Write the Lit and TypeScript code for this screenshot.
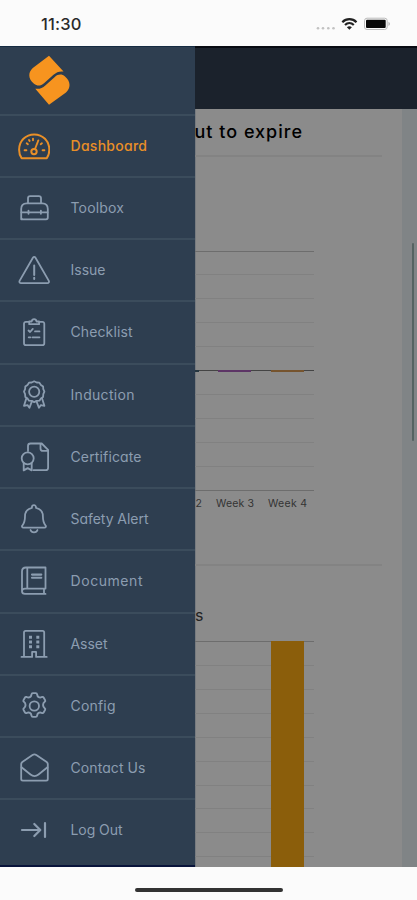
import { LitElement, html, svg, css } from "lit";
import { customElement, property } from "lit/decorators.js";
import { classMap } from "lit/directives/class-map.js";

const icons: Record<string, unknown> = {
  dashboard: svg`<path d="M3.6 28.2C2 26 1.1 23.3 1.1 19.7 1.1 11 7.6 4.4 16.2 4.4S31.3 11 31.3 19.7c0 3.600-.9 6.300-2.500 8.500z" stroke-width="2"/>
    <circle cx="16" cy="21.600" r="2.700" stroke-width="2"/><path d="M17 19l3.300-8.500" stroke-width="1.900"/>
    <path d="M6.600 20.300h1.800M24.600 20.300h1.800M8.700 13.300l1.200.9M15 8.600v1.600M23.900 13.300l-1.200.9M11 10l.6.9" stroke-width="1.900"/>`,
  toolbox: svg`<path d="M3.200 27.300V17c0-3.600 2.200-5.600 5.500-5.600h15.600c3.300 0 5.500 2 5.500 5.600v8.600c0 1.100-.6 1.700-1.700 1.700H4.900c-1.100 0-1.700-.6-1.700-1.700z"/>
    <path d="M10 11.200V6.300c0-1.400.8-2.200 2.200-2.200h8.600c1.400 0 2.200.8 2.200 2.200v4.900M3.400 20.300h26.200M10.500 18.600v3.200M22.900 18.600v3.200"/>`,
  issue: svg`<path d="M14.900 3.700 1.700 26.600c-.7 1.300-.1 2.500 1.400 2.500h26.200c1.500 0 2.100-1.200 1.400-2.500L17.500 3.700c-.7-1.100-1.900-1.100-2.600 0z"/>
    <path d="M16.200 11.500v9.500M16.200 23.800v1.200" stroke-width="2"/>`,
  checklist: svg`<path d="M11 5.800H7.900c-1.100 0-1.900.8-1.900 1.900v19.500c0 1.100.8 1.900 1.900 1.900h16.500c1.100 0 1.900-.8 1.900-1.900V7.700c0-1.100-.8-1.900-1.900-1.900h-3.100"/>
    <path d="M11.200 8.200V5.500h2.500c.2-1.500 1-2.400 2.400-2.400s2.200.9 2.400 2.400h2.600v2.700z"/>
    <path d="M10.500 14.500l1.600 1.500 2.700-3.100M17 15.400h4.500M10.700 21.300h1.700M14.500 21.300h7"/>`,
  induction: svg`<path d="M16.200 2.300l2.500 1.200 2.700.2 1.500 2.200 2.200 1.600.2 2.700 1.100 2.500-1.100 2.500-.2 2.700-2.200 1.600-1.500 2.200-2.700.2-2.500 1.200-2.500-1.200-2.700-.2-1.500-2.200-2.200-1.600-.2-2.700L6 12.700l1.100-2.500.2-2.700 2.200-1.600L11 3.700l2.700-.2z"/>
    <circle cx="16.200" cy="12.700" r="5.100"/>
    <path d="M8.400 19.300L6 26.800l3.500-.7 1.900 2.700 2.600-6.600M24 19.300l2.400 7.500-3.500-.7-1.900 2.700-2.600-6.600"/>`,
  certificate: svg`<path d="M10 10V5c0-1.700.8-2.500 2.500-2.500h11.200l6.400 6.400v17.800c0 1.700-.8 2.500-2.500 2.500H15.500M22.500 2.900v4.500c0 1.700.8 2.500 2.500 2.500h4.800"/>
    <circle cx="9.700" cy="17.300" r="6"/><path d="M5.700 22v7.400l4-2.300 4 2.300V22"/>`,
  bell: svg`<path d="M13.900 4.900C9.400 5.900 7 9.100 7 13.400c0 4.900-.6 6.500-2.600 8.900-.8.900-.4 2.400 1.100 2.400h20.900c1.500 0 1.900-1.500 1.100-2.400-2-2.400-2.600-4-2.600-8.900 0-4.300-2.400-7.500-6.900-8.500V4.200c0-1.100-.9-2-2-2s-2.100.9-2.100 2z"/>
    <path d="M12.500 27c.5 1.500 1.700 2.400 3.500 2.400s3-.9 3.500-2.400"/>`,
  document: svg`<path d="M27.500 23.600V2.500H8c-2.500 0-4 1.600-4 4v19.200M27.500 23.600H7c-1.900 0-3 1-3 2.600s1.100 2.700 3 2.700h20.500M26 23.800v4.800M9.300 2.800v20.500"/>
    <path d="M14 9.600h9.300M14 12.800h9.300" stroke-width="2.100"/>`,
  asset: svg`<path d="M6 28.800V4.500c0-1 .6-1.600 1.600-1.600h17c1 0 1.600.6 1.600 1.600v24.300M3.500 28.900h10.600v-5h4v5h10.600"/>
    <path d="M11 9.200h3M18.300 9.200h3M11 14h3M18.300 14h3M11 18.800h3M18.300 18.800h3" stroke-width="2.900" stroke-linecap="butt"/>`,
  config: svg`<circle cx="16.300" cy="16" r="4.700"/>
    <path d="M14.800 3.100h3c.9 0 1.200.4 1.300 1.200.3 2.700 2.300 3.800 4.800 2.700.8-.3 1.300-.2 1.700.5l1.500 2.600c.4.700.3 1.200-.4 1.700-2.200 1.600-2.200 4.800 0 6.400.7.500.8 1 .4 1.700l-1.500 2.600c-.4.700-.9.800-1.700.5-2.500-1.100-4.500 0-4.800 2.700-.1.800-.4 1.200-1.300 1.200h-3c-.9 0-1.200-.4-1.300-1.200-.3-2.700-2.300-3.800-4.800-2.700-.8.300-1.300.2-1.700-.5l-1.500-2.600c-.4-.7-.3-1.200.4-1.700 2.200-1.600 2.200-4.800 0-6.400-.7-.5-.8-1-.4-1.700l1.500-2.600c.4-.7.900-.8 1.700-.5 2.500 1.100 4.500 0 4.800-2.700.1-.8.400-1.200 1.300-1.200z" stroke-width="1.900"/>`,
  contact: svg`<path d="M3.200 27V12.200c0-1 .3-1.600 1.100-2.200L14.500 3.100c1.300-.9 2.500-.9 3.800 0L28.700 10c.8.600 1.100 1.200 1.100 2.200V27c0 1-.6 1.600-1.600 1.600H4.800c-1 0-1.600-.6-1.600-1.600z"/>
    <path d="M3.500 15.200l9 7.300c2.500 2 5.500 2 8 0l9-7.300"/>`,
  logout: svg`<path d="M4 16h18M16.300 10l6 6-6 6M27 9.200v13.700" stroke-width="2.200"/>`,
};

const items = [
  { icon: "dashboard", label: "Dashboard", width: 76.500 },
  { icon: "toolbox", label: "Toolbox", width: 53.500 },
  { icon: "issue", label: "Issue", width: 35 },
  { icon: "checklist", label: "Checklist", width: 62 },
  { icon: "induction", label: "Induction", width: 64 },
  { icon: "certificate", label: "Certificate", width: 71 },
  { icon: "bell", label: "Safety Alert", width: 78 },
  { icon: "document", label: "Document", width: 72 },
  { icon: "asset", label: "Asset", width: 37 },
  { icon: "config", label: "Config", width: 45 },
  { icon: "contact", label: "Contact Us", width: 75 },
  { icon: "logout", label: "Log Out", width: 52 },
];

@customElement("menu-row")
class MenuRow extends LitElement {
  @property() icon = "";
  @property() label = "";
  @property({ type: Number }) span = 60;
  @property({ type: Boolean }) active = false;

  static styles = css`
    :host { display: block; flex: 0 0 62.250px; box-sizing: border-box; border-top: 2px solid #3b4c5c; }
    .row { display: flex; align-items: center; height: 100%; padding-left: 18px; gap: 20px; color: #8c9db0; }
    .active { color: #e98f27; }
    .icon { width: 32px; height: 32px; fill: none; stroke: currentColor; stroke-width: 1.8; stroke-linecap: round; stroke-linejoin: round; }
    .label { width: 110px; height: 24px; overflow: visible; fill: currentColor; font: 400 14px Inter, sans-serif; font-feature-settings: "cv11"; }
    .active .label { font-weight: 500; }
  `;

  render() {
    return html`<div class=${classMap({ row: true, active: this.active })}>
      <svg class="icon" viewBox="0 0 32 32">${icons[this.icon]}</svg>
      <svg class="label"><text x="0.500" y="17" textLength=${this.span}>${this.label}</text></svg>
    </div>`;
  }
}

@customElement("app-root")
class AppRoot extends LitElement {
  static styles = css`
    :host { display: flex; flex-direction: column; width: 417px; height: 900px; overflow: hidden; background: #fbfbfb; font-family: Inter, sans-serif; font-feature-settings: "cv11"; }
    .status { flex: 0 0 46px; box-sizing: border-box; display: flex; justify-content: space-between; padding: 0 26px 0 41px; }
    .time { font: 500 16.500px/46px Inter, sans-serif; letter-spacing: .2px; padding-top: 1px; height: 45px; color: #2a2a2a; }
    .signals { width: 76px; height: 46px; }
    .stage { flex: 0 0 821px; display: flex; overflow: hidden; }
    .drawer { flex: 0 0 195px; box-sizing: border-box; display: flex; flex-direction: column; background: #2e3e50; border-top: 1px solid #152b42; border-bottom: 2px solid #08133a; }
    .brand { flex: 0 0 66.600px; }
    .logo { display: block; width: 42px; height: 50px; margin: 8px 0 0 28px; }
    .pane { flex: 1; display: flex; flex-direction: column; overflow: hidden; }
    .bar { flex: 0 0 63px; box-sizing: border-box; background: #1b222c; border-top: 2px solid #080b12; }
    .body { flex: 1; display: flex; min-height: 0; background: #808486; }
    .card { width: 207px; background: #8b8b8b; box-shadow: inset 1px 0 #777b80; overflow: hidden; }
    .gutter { flex: 1; padding: 134px 3px 0 0; display: flex; justify-content: flex-end; }
    .thumb { width: 2px; height: 198px; background: #566362; border-radius: 1px; }
    .title { height: 46px; font: 500 18px/46px Inter, sans-serif; color: #0c0c0c; }
    .title-text { display: block; width: 120px; height: 46px; }
    .rule { height: 2px; width: 187px; background: #838383; }
    .plot { position: relative; width: 119px; margin-top: 93.500px; }
    .step { box-sizing: border-box; height: 23.940px; border-top: 1px solid #818181; }
    .edge { border-top-color: #6d6d6d; }
    .axis { border-top-color: #444; }
    .end { height: 1px; background: #6d6d6d; }
    .mark { position: absolute; top: 119px; height: 2px; width: 33px; }
    .slate { left: 0; width: 4px; background: #263640; }
    .purple { left: 23px; background: #5d3566; }
    .amber { left: 76px; background: #76542e; }
    .weeks { display: block; width: 119px; height: 24px; font-size: 10.500px; fill: #333; }
    .second { padding-top: 49px; }
    .name { font: 400 16px/32px Inter, sans-serif; height: 32px; margin-top: 33px; color: #222; }
    .plot2 { margin-top: 10px; }
    .column { position: absolute; left: 76px; top: 0; width: 32.500px; height: 300px; background: #8b5e0b; }
    .home { flex: 0 0 33px; box-sizing: border-box; padding: 21px 0 0 135px; }
    .pill { width: 148px; height: 4px; border-radius: 2px; background: #333; }
  `;

  render() {
    return html`
      <div class="status">
        <span class="time">11:30</span>
        <svg class="signals" viewBox="315 0 76 46">
          <g fill="#c2c2c2"><circle cx="318" cy="28.300" r="1.300"/><circle cx="323" cy="28.300" r="1.300"/><circle cx="328.300" cy="28.300" r="1.300"/><circle cx="333.500" cy="28.300" r="1.300"/></g>
          <g fill="none" stroke="#222" stroke-width="2.200"><path d="M342.300 22.200c4-4 10.200-4 14.200 0"/><path d="M345 25c2.600-2.500 6.200-2.500 8.800 0"/></g>
          <path d="M346.900 27.200c1.500-1.200 3.500-1.200 5 0l-2.500 2.600z" fill="#222"/>
          <rect x="364.500" y="18.200" width="22.700" height="11.300" rx="2.500" fill="none" stroke="#bbb"/>
          <rect x="366" y="19.700" width="19.700" height="8.300" rx="1" fill="#080808"/>
          <path d="M388.600 21.700q2.200 2.100 0 4.200z" fill="#999"/>
        </svg>
      </div>
      <div class="stage">
        <nav class="drawer">
          <div class="brand">
            <svg class="logo" viewBox="28 55 42 50">
              <path fill="#f7941f" d="M49 55.700L63.500 71.500C59.500 71 56.500 72 53.500 74.800L44 83.200c-3.300 3-6.700 3.200-10 .6-5.800-4.600-6.300-11-1.200-15.700z"/>
              <path fill="#f7941f" d="M49 104.800L35.300 88.700c4 .6 7-.4 10-3.200l9.500-8.500c3.400-3 6.900-3.200 10.200-.6 5.700 4.500 6 11.400 1 16z"/>
            </svg>
          </div>
          ${items.map((it, i) => html`<menu-row .icon=${it.icon} .label=${it.label} .span=${it.width} .active=${i === 0}></menu-row>`)}
        </nav>
        <main class="pane">
          <div class="bar"></div>
          <div class="body">
            <section class="card">
              <svg class="title-text title"><text x="-0.500" y="29" textLength="107.500">ut to expire</text></svg>
              <div class="rule"></div>
              <div class="plot">
                ${Array.from({ length: 10 }, (_, i) => html`<div class=${classMap({ step: true, edge: i === 0, axis: i === 5 })}></div>`)}
                <div class="end"></div>
                <div class="mark slate"></div><div class="mark purple"></div><div class="mark amber"></div>
              </div>
              <svg class="weeks"><text x="0.500" y="16">2</text><text x="21" y="16" textLength="38">Week 3</text><text x="73" y="16" textLength="39">Week 4</text></svg>
              <div class="second">
                <div class="rule"></div>
                <div class="name">s</div>
                <div class="plot plot2">
                  ${Array.from({ length: 10 }, (_, i) => html`<div class=${classMap({ step: true, edge: i === 0 })}></div>`)}
                  <div class="column"></div>
                </div>
              </div>
            </section>
            <div class="gutter"><div class="thumb"></div></div>
          </div>
        </main>
      </div>
      <div class="home"><div class="pill"></div></div>
    `;
  }
}
